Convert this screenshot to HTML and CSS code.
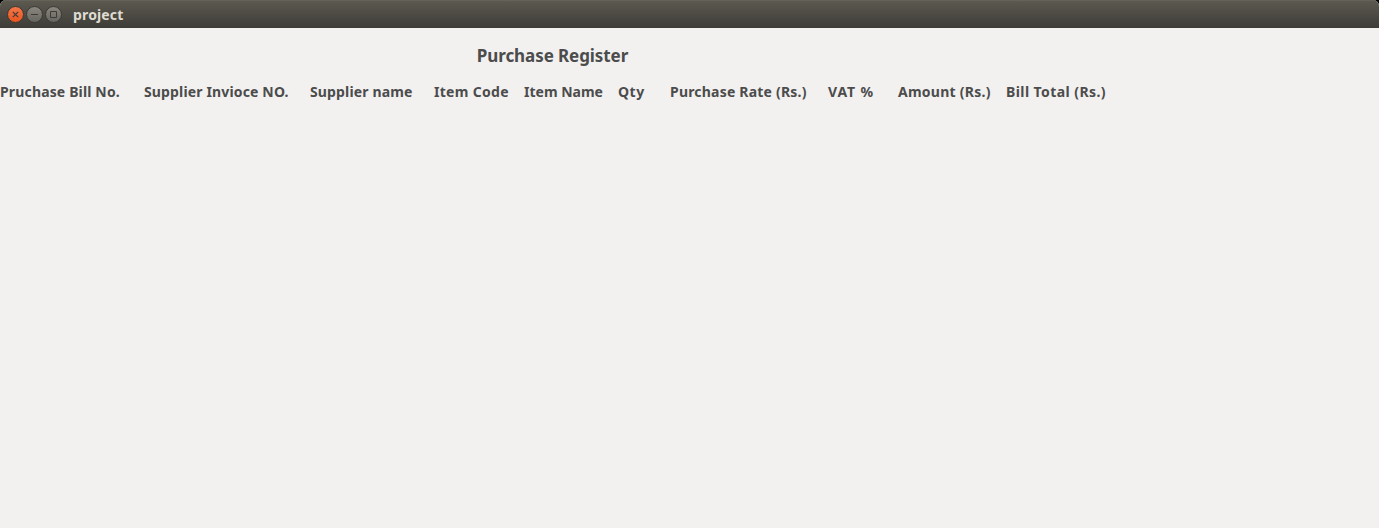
FILE: index.html
```html
<!DOCTYPE html>
<html lang="en">
<head>
<meta charset="utf-8">
<title>project</title>
<link rel="stylesheet" href="styles.css">
</head>
<body>
<div class="window">
  <header class="titlebar">
    <svg class="controls" width="57" height="20" viewBox="0 0 57 20">
      <defs>
        <linearGradient id="orange" x1="0" y1="0" x2="0" y2="1"><stop offset="0" stop-color="#f5774b"/><stop offset="1" stop-color="#e8541f"/></linearGradient>
        <linearGradient id="gray" x1="0" y1="0" x2="0" y2="1"><stop offset="0" stop-color="#8a8880"/><stop offset="1" stop-color="#66645e"/></linearGradient>
      </defs>
      <g stroke="#3a3934" stroke-width="1">
        <circle cx="9.5" cy="10.5" r="8" fill="url(#orange)"/>
        <circle cx="28.5" cy="10.5" r="8" fill="url(#gray)"/>
        <circle cx="47.5" cy="10.5" r="8" fill="url(#gray)"/>
      </g>
      <g fill="none" stroke="#3c3b37" stroke-width="1.2">
        <path d="M6.8 7.8l5.4 5.4M12.2 7.8l-5.4 5.4"/>
        <path d="M25 10.5h7" stroke-width="1"/>
        <path d="M44.5 7.5h6v6h-6z" stroke-width="1"/>
      </g>
    </svg>
    <span class="caption">project</span>
  </header>
  <main class="content">
    <h1 class="heading"><span>Purchase Register</span></h1>
    <div class="columns">
      <span class="bill-no">Pruchase Bill No.</span>
      <span class="invoice-no">Supplier Invioce NO.</span>
      <span class="supplier">Supplier name</span>
      <span class="item-code">Item Code</span>
      <span class="item-name">Item Name</span>
      <span class="qty">Qty</span>
      <span class="rate">Purchase Rate (Rs.)</span>
      <span class="vat">VAT %</span>
      <span class="amount">Amount (Rs.)</span>
      <span class="total">Bill Total (Rs.)</span>
    </div>
  </main>
</div>
</body>
</html>
```

FILE: styles.css
```css
body {
  margin: 0;
  background: #000;
  font-family: "Noto Sans", "Open Sans", sans-serif;
  font-weight: 700;
  color: #4c4c4c;
}
.window {
  display: flex;
  flex-direction: column;
  height: 528px;
  overflow: hidden;
  border-radius: 6px 6px 0 0;
  background: #f2f1f0;
}
.titlebar {
  display: flex;
  align-items: center;
  box-sizing: border-box;
  height: 28px;
  padding-left: 6px;
  background: linear-gradient(#5d5a51, #3d3c37);
  box-shadow: inset 0 1px #65625a;
}
.controls {
  margin-right: 10px;
}
.caption {
  padding-top: 2px;
  font-size: 14px;
  line-height: 20px;
  letter-spacing: 0.15px;
  color: #dfdbd2;
}
.content {
  display: flex;
  flex-direction: column;
}
.heading {
  width: 1105px;
  margin: 16px 0 12px;
  font-size: 17px;
  line-height: 24px;
  letter-spacing: -0.08px;
  text-align: center;
}
.columns {
  display: grid;
  grid-template-columns: 144px 166px 124px 90px 94px 52px 158px 70px 108px 101px;
  font-size: 14px;
  line-height: 24px;
  letter-spacing: 0.15px;
  white-space: nowrap;
}
.item-code {
  letter-spacing: 0.3px;
}
.item-name {
  letter-spacing: 0;
}
.qty {
  letter-spacing: 0.5px;
}
.rate {
  letter-spacing: 0.2px;
}
.vat {
  letter-spacing: 0.9px;
}
.amount {
  letter-spacing: 0.25px;
}
.total {
  letter-spacing: 0.42px;
}
```
